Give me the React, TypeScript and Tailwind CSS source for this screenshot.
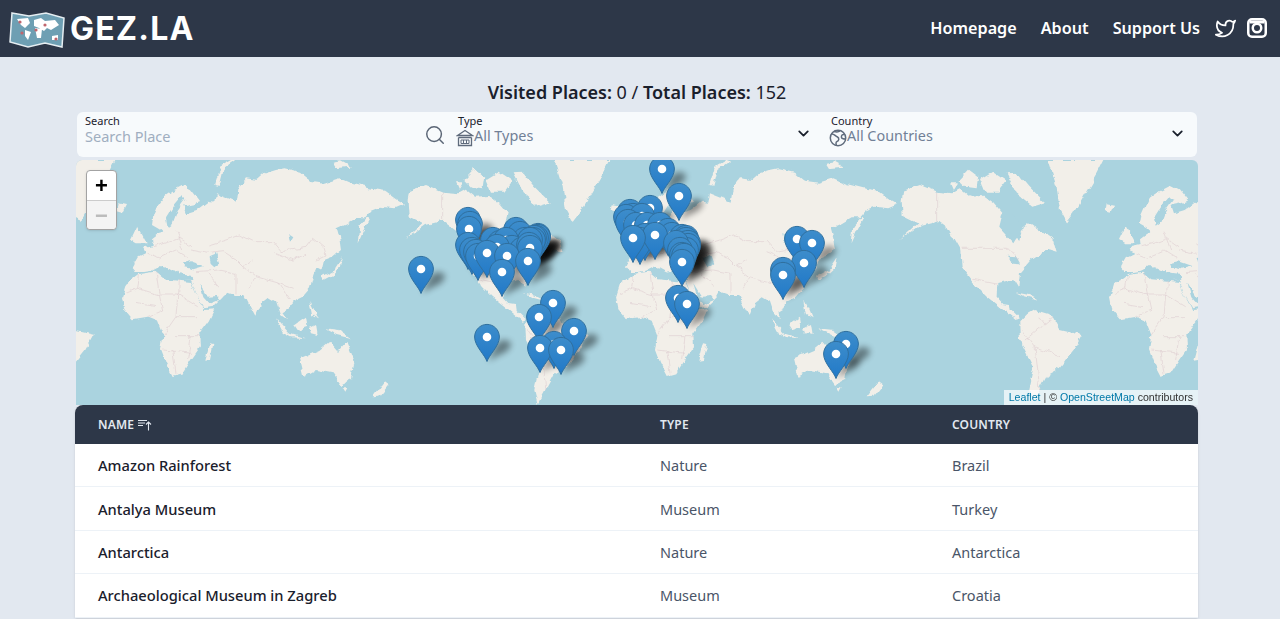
import { ChevronDown } from "lucide-react";
import { FiSearch, FiTwitter } from "react-icons/fi";

const UI_FONT = "font-['Noto_Sans',sans-serif]";

const rows = [
  { name: "Amazon Rainforest", type: "Nature", country: "Brazil" },
  { name: "Antalya Museum", type: "Museum", country: "Turkey" },
  { name: "Antarctica", type: "Nature", country: "Antarctica" },
  { name: "Archaeological Museum in Zagreb", type: "Museum", country: "Croatia" },
];

// white dot centres of the pins, in page px, back to front
const pins: [number, number][] = [
  [662, 169], [679, 196],
  [650, 208], [630, 212], [633, 216], [626, 217], [642, 216], [628, 222], [636, 225], [647, 225], [660, 225],
  [468, 220], [470, 224], [469, 229],
  [516, 230], [520, 234], [538, 236], [538, 237], [536, 238], [534, 238], [533, 240], [525, 240], [530, 240], [493, 240], [500, 243], [506, 240],
  [468, 245], [512, 248], [522, 250], [529, 245], [530, 248], [472, 250], [497, 247], [476, 252], [478, 256],
  [668, 231], [672, 235], [682, 237], [686, 238], [686, 240], [645, 236], [640, 240], [655, 235], [633, 238],
  [487, 253], [507, 256], [688, 243], [688, 246], [686, 250], [676, 243], [680, 250], [682, 255], [684, 256], [528, 261], [682, 262], [502, 272], [421, 269],
  [797, 239], [812, 243], [804, 263], [783, 270], [783, 275],
  [678, 298], [687, 304], [553, 303], [539, 317], [574, 331], [487, 337], [554, 344], [540, 348], [561, 350],
  [846, 344], [836, 354],
];

function OldWorld() {
  // traced at 3x of the map, scale brings it back
  return (
    <g id="old-world" transform="scale(0.3333)">
      <g fill="#f2efe9">
        <path d="M228 192 L232 165 L245 135 L262 112 L290 92 L322 76 L345 88 L372 122 L352 130 L322 136 L330 160 L362 150 L395 125 L415 128 L420 100 L450 112 L482 125 L488 85 L510 55 L545 60 L568 40 L600 30 L625 25 L672 35 L705 62 L745 68 L790 55 L830 72 L880 85 L925 92 L960 118 L985 132 L955 145 L915 140 L885 152 L868 172 L845 172 L815 190 L782 205 L790 235 L795 270 L770 290 L745 300 L738 330 L722 322 L712 345 L702 385 L680 410 L650 425 L640 445 L622 455 L636 478 L612 462 L600 425 L578 412 L555 430 L538 470 L522 440 L505 405 L478 405 L450 395 L442 410 L412 440 L385 445 L365 410 L345 360 L310 355 L305 332 L290 336 L255 318 L228 332 L205 336 L180 336 L168 322 L185 292 L210 280 L200 262 L230 255 L228 235 L250 218 L262 215 L250 205 Z" />
        <path d="M138 410 L150 372 L190 342 L235 335 L262 358 L310 362 L345 366 L368 418 L385 450 L415 448 L398 482 L370 520 L372 562 L345 600 L320 640 L290 648 L270 610 L255 570 L262 525 L245 482 L215 470 L170 478 L145 448 Z" />
      </g>
      {/* seas */}
      <g fill="#aad3df">
        <path d="M245 326 L270 322 L300 338 L350 345 L352 360 L310 358 L280 350 L250 340 Z" />
        <path d="M318 310 L345 304 L385 318 L352 328 L325 322 Z" />
        <path d="M398 292 L420 282 L430 310 L415 322 L402 310 Z" />
        <path d="M370 370 L395 410 L420 408 L430 420 L400 432 L382 412 Z" />
        <path d="M270 175 L295 135 L318 108 L328 118 L305 150 L290 190 L275 200 Z" />
        <path d="M640 222 L655 232 L645 248 Z" />
      </g>
      {/* islands */}
      <g fill="#f2efe9">
        <path d="M172 305 L205 302 L208 326 L178 335 Z" />
        <path d="M165 240 L185 198 L212 250 L182 250 Z" />
        <path d="M125 130 L150 135 L140 155 L122 150 Z" />
        <path d="M418 75 L435 20 L470 0 L480 4 L442 30 L430 78 Z" />
        <path d="M770 8 L795 4 L825 20 L780 24 Z" />
        <path d="M845 250 L850 200 L875 170 L880 178 L860 215 Z" />
        <path d="M738 350 L775 330 L800 292 L795 320 L770 345 L742 360 Z" />
        <path d="M388 602 L402 550 L412 552 L402 600 Z" />
        <path d="M700 420 L715 450 L725 475 L708 465 Z" />
        <path d="M600 475 L640 520 L690 535 L650 532 L620 515 Z" />
        <path d="M655 495 L690 470 L695 500 L665 510 Z" />
        <path d="M700 505 L720 495 L725 525 L705 520 Z" />
        <path d="M745 505 L790 510 L825 535 L785 525 Z" />
        <path d="M672 595 L730 570 L760 545 L785 575 L810 545 L835 610 L825 660 L795 675 L770 640 L720 630 L685 650 Z" />
        <path d="M800 682 L815 682 L808 695 Z" />
        <path d="M890 712 L925 665 L938 675 L910 710 Z" />
      </g>
      {/* borders */}
      <g fill="none" stroke="#d8c2c8" strokeWidth="1.4">
        <path d="M400 255 L450 240 L490 225 L530 245 L590 245 L615 275 L690 262 L710 235 L745 265 L750 285 L720 300 M590 275 L650 300 L690 280 M400 280 L440 275 L480 300 L500 320 L540 350 L610 370 L650 385 M500 320 L530 300 M540 350 L520 385 M610 370 L640 420 M230 260 L270 250 L310 235 L345 260 M255 290 L300 270 L340 295 M300 215 L320 270 M345 270 L395 280 M215 280 L255 295 M430 330 L480 340 L480 400 M395 340 L430 380 M360 335 L430 330" />
        <path d="M310 360 L308 405 L365 440 M240 338 L250 405 L308 405 M185 385 L250 405 L260 450 L215 470 M305 405 L300 470 L262 525 M300 470 L360 470 M300 530 L372 530 M262 570 L345 580 M290 570 L300 640 M345 530 L335 600 M180 430 L240 440 M150 400 L185 385 M190 345 L185 385" />
      </g>
    </g>
  );
}

function NewWorld() {
  return (
    <g id="new-world" transform="translate(644 0) scale(0.3333)">
      <g fill="#f2efe9">
        <path d="M548 168 L545 120 L550 92 L600 75 L650 95 L700 100 L722 88 L750 110 L790 108 L820 130 L845 160 L835 200 L880 250 L905 210 L930 190 L965 215 L1000 240 L1010 275 L985 268 L935 300 L900 340 L895 385 L880 360 L832 372 L830 410 L850 432 L870 435 L872 450 L900 478 L890 482 L850 450 L800 410 L770 380 L752 355 L725 320 L720 265 L690 212 L650 182 L600 195 L540 238 L592 190 Z" />
        <path d="M898 490 L925 462 L945 450 L995 465 L1020 510 L1085 525 L1060 570 L1020 620 L985 640 L958 690 L935 732 L925 690 L940 620 L900 540 Z" />
        <path d="M985 0 H1150 L1130 40 L1100 90 L1060 160 L1040 186 L1020 150 L1010 80 Z" />
        <path d="M715 60 L745 28 L775 50 L770 85 L735 80 Z" />
        <path d="M780 60 L820 35 L860 62 L835 95 L795 95 Z" />
        <path d="M860 40 L890 38 L925 80 L975 130 L940 140 L890 100 Z" />
        <path d="M690 70 L715 70 L700 92 Z" />
        <path d="M890 400 L930 408 L955 422 L915 412 Z" />
      </g>
      <g fill="#aad3df">
        <path d="M842 172 L880 165 L905 195 L895 240 L860 205 Z" />
        <path d="M860 290 L890 292 L900 310 L880 308 Z" />
      </g>
      <g fill="none" stroke="#d8c2c8" strokeWidth="1.4">
        <path d="M650 95 L650 182 M725 265 L860 265 L895 300 M760 358 L830 372 M905 510 L945 560 L960 690 M945 560 L1020 590 M915 540 L975 490 M960 470 L975 490 L1000 470" />
      </g>
    </g>
  );
}

function MapDrawing() {
  return (
    <svg viewBox="0 0 1122 245" className="block w-full h-full">
      <defs>
        <linearGradient id="pinFill" x1="0" y1="0" x2="0" y2="1">
          <stop offset="0" stopColor="#3d8dcb" />
          <stop offset="1" stopColor="#2179c8" />
        </linearGradient>
        <filter id="pinBlur" x="-80%" y="-80%" width="260%" height="260%">
          <feGaussianBlur stdDeviation="3" />
        </filter>
        {/* wobble so the coasts don't read as straight segments */}
        <filter id="coast" filterUnits="userSpaceOnUse" x="0" y="0" width="1122" height="245" colorInterpolationFilters="sRGB">
          <feTurbulence type="fractalNoise" baseFrequency="0.1" numOctaves="3" seed="4" />
          <feDisplacementMap in="SourceGraphic" scale="6" xChannelSelector="R" yChannelSelector="G" />
        </filter>
      </defs>
      <rect width="1122" height="245" fill="#aad3df" />
      <g filter="url(#coast)">
        <OldWorld />
        <use href="#old-world" transform="translate(494 0)" />
        <use href="#old-world" transform="translate(988 0)" />
        <NewWorld />
        <use href="#new-world" transform="translate(-494 0)" />
        <use href="#new-world" transform="translate(-988 0)" />
      </g>
      {pins.map(([x, y], i) => (
        <path
          key={"s" + i}
          transform={`translate(${x - 76} ${y - 160})`}
          d="M1 24 L10 6 Q18 0 24 6 Q24 14 12 18 Z"
          fill="#000"
          opacity="0.42"
          filter="url(#pinBlur)"
        />
      ))}
      {pins.map(([x, y], i) => (
        <g key={"p" + i} transform={`translate(${x - 76} ${y - 160})`}>
          <path
            d="M0 24.5 C-2 18 -12.4 9 -12.4 0 C-12.4 -7 -6.8 -12.6 0 -12.6 C6.8 -12.6 12.4 -7 12.4 0 C12.4 9 2 18 0 24.5 Z"
            fill="url(#pinFill)"
            stroke="#2f6f9e"
            strokeWidth="1"
          />
          <circle r="4.3" fill="#fff" />
        </g>
      ))}
    </svg>
  );
}

function MuseumIcon() {
  return (
    <svg viewBox="0 0 18 18" className="w-[18px] h-[18px] shrink-0" fill="none" stroke="#5f6b7c" strokeWidth="1.3">
      <path d="M1.5 6.5 L9 1.5 L16.5 6.5 Z" />
      <path d="M2.5 8.5 H15.5 M2.5 8.5 V16.5 H15.5 V8.5" />
      <path d="M5 11 H13 V14.5 H5 Z M7.5 11 V14.5 M10.5 11 V14.5" strokeWidth="1" />
    </svg>
  );
}

function GlobeIcon() {
  return (
    <svg viewBox="0 0 18 18" className="w-[18px] h-[18px] shrink-0" fill="none" stroke="#5f6b7c" strokeWidth="1.5">
      <circle cx="9" cy="9" r="7.7" />
      <path d="M2.5 5 C5 4.5 6 7 8.5 8 C10.5 9 10 12 8 12.5 C6.5 13 7 15.5 7.5 16.5 M15.5 5.5 C13.5 5 12 6.5 12.5 8.5 C13 10 15 10 16.5 10 M5 2.5 C7 3 9 3.5 11 2" />
    </svg>
  );
}

function LogoMap() {
  return (
    <svg viewBox="0 0 56 38" className="w-14 h-[38px] shrink-0">
      <path d="M3 3 L20 6 L37 3 L55 8 L53 37 L36 33 L19 37 L1 32 Z" fill="#6e9fb3" stroke="#e6eef2" strokeWidth="1.5" />
      <path d="M8 9 L19 8 L21 13 L16 18 L12 15 Z M16 20 L22 22 L19 30 L16 26 Z M25 10 L32 8 L36 11 L46 10 L50 15 L42 20 L38 18 L35 21 L30 18 L25 16 Z M26 18 L33 19 L32 28 L28 28 Z M43 26 L49 25 L49 30 L43 30 Z" fill="#fff" />
      <circle cx="11" cy="12" r="1.6" fill="#c0656d" />
      <circle cx="13" cy="23" r="1.6" fill="#c0656d" />
      <circle cx="27" cy="20" r="1.6" fill="#c0656d" />
      <circle cx="36" cy="15" r="1.6" fill="#c0656d" />
      <circle cx="47" cy="29" r="1.6" fill="#c0656d" />
    </svg>
  );
}

function InstagramIcon() {
  return (
    <svg viewBox="0 0 20 20" className="w-5 h-5">
      <path
        fillRule="evenodd"
        fill="#fff"
        d="M5 0 H15 A5 5 0 0 1 20 5 V15 A5 5 0 0 1 15 20 H5 A5 5 0 0 1 0 15 V5 A5 5 0 0 1 5 0 Z M5 2.5 A2.5 2.5 0 0 0 2.5 5 V15 A2.5 2.5 0 0 0 5 17.5 H15 A2.5 2.5 0 0 0 17.5 15 V5 A2.5 2.5 0 0 0 15 2.5 Z"
      />
      <path fillRule="evenodd" fill="#fff" d="M10 4.5 A5.5 5.5 0 1 1 10 15.5 A5.5 5.5 0 1 1 10 4.5 Z M10 7 A3 3 0 1 0 10 13 A3 3 0 1 0 10 7 Z" />
      <rect x="2.5" y="2.5" width="15" height="3" fill="#fff" />
    </svg>
  );
}

export default function App() {
  return (
    <div className={`h-screen overflow-hidden bg-[#e2e8f0] ${UI_FONT}`}>
      {/* Header */}
      <header className="h-[57px] bg-[#2d3748] flex items-center justify-between pl-[9px] pr-[13px]">
        <div className="flex items-center gap-[5px]">
          <LogoMap />
          <span className="font-['Inter',sans-serif] font-bold text-[32px] leading-none tracking-[1.2px] text-white">GEZ.LA</span>
        </div>
        <nav className="flex items-center text-white font-semibold text-[16.2px]">
          <a className="mr-[24px]">Homepage</a>
          <a className="mr-[24px]">About</a>
          <a className="mr-[15px]">Support Us</a>
          <FiTwitter size={21} className="mr-[11px]" />
          <InstagramIcon />
        </nav>
      </header>

      <main className="pl-[75px] w-[1199px]">
        <h3 className="h-[55px] flex items-center justify-center text-[18px] text-[#1a202c] pt-[16px]">
          <span>
            <b className="font-semibold">Visited Places:</b> 0 / <b className="font-semibold">Total Places:</b> 152
          </span>
        </h3>

        {/* Filters */}
        <div className="ml-[2px] w-[1120px] h-[45px] bg-[#f7fafc] rounded-md grid grid-cols-[373px_373px_374px] mb-[3px]">
          <div className="relative px-2 pt-[2px]">
            <div className="text-[11px] leading-[13px] text-[#1a202c]">Search</div>
            <div className="text-[14.5px] leading-[19px] text-[#a0aec0]">Search Place</div>
            <FiSearch size={22} strokeWidth={1.6} className="absolute right-[4px] top-[12px] text-[#5a6575]" />
          </div>
          <div className="relative px-2 pt-[2px]">
            <div className="text-[11px] leading-[13px] text-[#1a202c]">Type</div>
            <div className="flex items-center text-[14.4px] leading-[18px] text-[#718096]">
              <span className="-ml-[2px] translate-y-[2px]"><MuseumIcon /></span>
              All Types
            </div>
            <ChevronDown size={17} strokeWidth={2.5} className="absolute right-[11px] top-[13px] text-[#1a202c]" />
          </div>
          <div className="relative px-2 pt-[2px]">
            <div className="text-[11px] leading-[13px] text-[#1a202c]">Country</div>
            <div className="flex items-center text-[14.4px] leading-[18px] text-[#718096]">
              <span className="-ml-[2px] translate-y-[2px]"><GlobeIcon /></span>
              All Countries
            </div>
            <ChevronDown size={17} strokeWidth={2.5} className="absolute right-[11px] top-[13px] text-[#1a202c]" />
          </div>
        </div>

        {/* Map */}
        <div className="relative ml-[1px] w-[1122px] h-[245px] rounded-t-md overflow-hidden">
          <MapDrawing />
          <div className="absolute left-[10px] top-[10px] w-[31px] rounded bg-white border border-[#a3a3a3] shadow-sm">
            <div className="h-[30px] flex items-center justify-center text-[22px] font-bold text-black border-b border-[#ccc] font-['Liberation_Sans',sans-serif]">+</div>
            <div className="h-[28px] flex items-center justify-center text-[22px] font-bold text-[#bbb] bg-[#f4f4f4] rounded-b font-['Liberation_Sans',sans-serif]">−</div>
          </div>
          <div className="absolute right-0 bottom-0 h-[15px] px-[5px] bg-white/70 text-[10.6px] leading-[15px] text-[#333] font-['Liberation_Sans',sans-serif]">
            <span className="text-[#0078a8]">Leaflet</span> | © <span className="text-[#0078a8]">OpenStreetMap</span> contributors
          </div>
        </div>

        {/* Table */}
        <div className="bg-white rounded-t-lg shadow w-[1123px] overflow-hidden">
          <div className="grid grid-cols-[562px_292px_1fr] h-[39px] items-center bg-[#2d3748] pl-[23px] text-[12px] font-semibold tracking-[0.15px] text-[#e2e8f0] uppercase">
            <div className="flex items-center gap-1">
              Name
              <svg viewBox="0 0 14 12" className="w-[14px] h-3" fill="none" stroke="#e2e8f0" strokeWidth="1.1">
                <path d="M0 1.5 H9 M0 4 H7 M0 6.5 H5 M10.5 11.5 V3 M8 5.5 L10.5 3 L13 5.5" />
              </svg>
            </div>
            <div>Type</div>
            <div>Country</div>
          </div>
          {rows.map((row) => (
            <div key={row.name} className="grid grid-cols-[562px_292px_1fr] h-[43.4px] items-center pl-[23px] pt-[2px] border-b border-[#edf2f7] text-[14.5px]">
              <div className="font-medium text-[14.7px] pb-[2px] text-[#1a202c]">{row.name}</div>
              <div className="text-[#4a5568]">{row.type}</div>
              <div className="text-[#4a5568]">{row.country}</div>
            </div>
          ))}
        </div>
      </main>
    </div>
  );
}
